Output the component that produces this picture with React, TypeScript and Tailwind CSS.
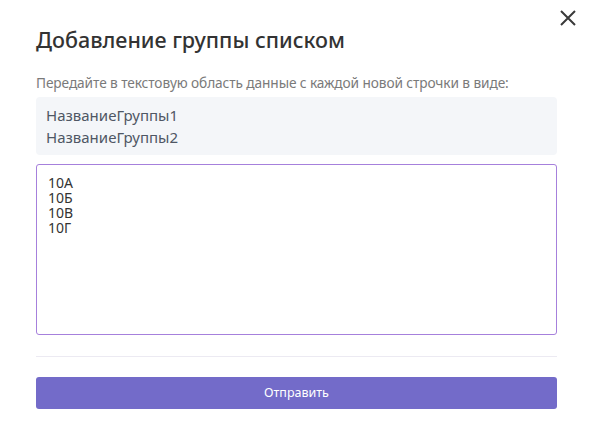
import { useState } from "react";

export default function App() {
  const [value, setValue] = useState("10А\n10Б\n10В\n10Г");

  return (
    <div className="relative min-h-[444px] w-full bg-white font-['Noto_Sans',sans-serif]">
      <button
        type="button"
        aria-label="Закрыть"
        className="absolute right-[16px] top-[9px] flex h-[18px] w-[18px] items-center justify-center text-[#3a3a3a]"
      >
        <svg width="18" height="18" viewBox="0 0 18 18" fill="none">
          <path d="M2 2L16 16M16 2L2 16" stroke="currentColor" strokeWidth="2" />
        </svg>
      </button>

      <div className="px-[36px] pt-[25px]">
        <h2 className="text-[21.5px] font-medium leading-[30px] text-[#333]">
          Добавление группы списком
        </h2>

        <p className="mt-[18px] text-[13.7px] leading-[20px] text-[#7a7a7a] tracking-[-0.1px]">
          Передайте в текстовую область данные с каждой новой строчки в виде:
        </p>

        <div className="mt-[4px] rounded-[4px] bg-[#f4f6f9] px-[10px] py-[7px] text-[15px] leading-[22px] text-[#4f5764]">
          <div>НазваниеГруппы1</div>
          <div>НазваниеГруппы2</div>
        </div>

        <textarea
          value={value}
          onChange={(e) => setValue(e.target.value)}
          className="mt-[9px] block h-[171px] w-full resize-none rounded-[3px] border border-[#a680dc] px-[11px] py-[10px] text-[14px] leading-[15px] text-[#333] outline-none"
        />

        <div className="mt-[21px] h-px w-full bg-[#eceaf2]" />

        <button
          type="button"
          className="mt-[20px] flex h-[32px] w-full items-center justify-center rounded-[3px] bg-[#736bc9] text-[12.5px] text-white"
        >
          Отправить
        </button>
      </div>
    </div>
  );
}
